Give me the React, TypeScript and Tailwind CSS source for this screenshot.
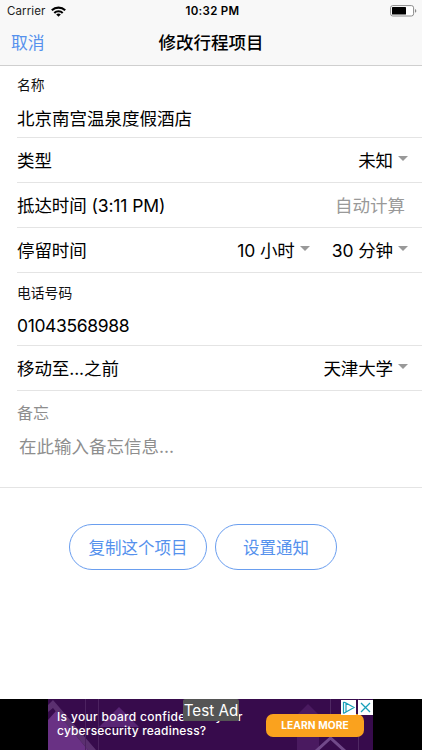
import React from 'react';

type PickerProps = {
  value: string;
  className?: string;
};

type RowProps = {
  label: string;
  className?: string;
  children?: React.ReactNode;
};

type FieldProps = {
  label: string;
  value: string;
  className?: string;
  valueClassName?: string;
};

const StatusBar: React.FC = () => (
  <div className="grid h-[22px] grid-cols-3 items-center pl-[7px] pr-[5px] text-[11.5px] leading-[22px]">
    <div className="flex items-center gap-[6px]">
      <span className="tracking-[0.1px] text-[#222]">Carrier</span>
      <svg width="15" height="11" viewBox="0 0 15 11" fill="none" stroke="#000" strokeWidth="2.1">
        <path d="M.8 4.3a9.6 9.6 0 0 1 13.4 0" />
        <path d="M3.3 7a6 6 0 0 1 8.4 0" />
        <path d="M7.5 10.8L5.2 8.5a3.3 3.3 0 0 1 4.6 0z" fill="#000" stroke="none" />
      </svg>
    </div>
    <span className="whitespace-nowrap pl-px text-center font-semibold tracking-[0.3px]">10:32 PM</span>
    <svg className="justify-self-end" width="27" height="12" viewBox="0 0 27 12">
      <rect x="0.6" y="0.6" width="23" height="10.4" rx="2.2" fill="#fff" stroke="#8b8b8b" />
      <rect x="2" y="2" width="14" height="7.6" rx="0.6" fill="#000" />
      <path d="M25 4v3.8c1.8-.6 1.8-3.2 0-3.8z" fill="#8b8b8b" />
    </svg>
  </div>
);

const Picker: React.FC<PickerProps> = ({ value, className = '' }) => (
  <div className={`flex items-center gap-[5px] ${className}`}>
    <span className="tracking-[-0.1px]">{value}</span>
    <svg className="mb-[5px]" width="10" height="5" viewBox="0 0 10 5">
      <path d="M0 0h10L5 5z" fill="#999" />
    </svg>
  </div>
);

const Row: React.FC<RowProps> = ({ label, className = 'h-[45px]', children }) => (
  <div className={`flex items-center justify-between border-b border-[#e4e4e4] pr-[14px] pt-[2px] ${className}`}>
    <span className="tracking-[-0.1px]">{label}</span>
    <div className="flex items-center">{children}</div>
  </div>
);

const Field: React.FC<FieldProps> = ({ label, value, className = '', valueClassName = '' }) => (
  <div className={`border-b border-[#e4e4e4] ${className}`}>
    <div className="text-[13.8px] leading-5 text-[#111]">{label}</div>
    <div className={`leading-[26px] ${valueClassName}`}>{value}</div>
  </div>
);

const AdBanner: React.FC = () => (
  <div className="relative flex h-[51px] bg-black pl-12">
    <div className="relative h-full w-[325px] overflow-hidden bg-[#370b4c]">
      <svg className="absolute inset-0" width="325" height="51" viewBox="0 0 325 51">
        <path d="M0 21L8 12L40 51H0z" fill="#693184" />
        <path d="M0 6L5 1L48 51H40L5 9L0 13z" fill="#5b3070" />
        <path d="M51 28L71 8L91 28z" fill="#592574" />
        <path d="M37.5 0V51M50.5 0V51" stroke="#4c2260" />
        <path d="M249 51V16L260 5L271 16V51z" fill="#4a1a60" />
        <path d="M282.5 0V39M310.5 0V51" stroke="#4f2863" />
        <path d="M267 53L282.5 39L298 53" fill="none" stroke="#71498a" strokeWidth="3" />
      </svg>
      <div className="relative flex h-full items-start justify-between">
        <p className="whitespace-nowrap pl-[9px] pt-[11px] text-[12px] font-medium leading-[14px] text-white">
          <span className="tracking-[0.32px]">Is your board confident in your</span>
          <br />
          <span className="tracking-[0.18px]">cybersecurity readiness?</span>
        </p>
        <button className="mr-[9px] mt-[15px] h-[23px] w-[98px] rounded-[7px] bg-[#faa21e] text-[10.2px] font-bold tracking-[0.1px] text-white">
          LEARN MORE
        </button>
      </div>
      <div className="absolute right-0 top-[1px] flex gap-[2px]">
        <svg width="15" height="15" viewBox="0 0 15 15" fill="none" stroke="#18a0b9">
          <path d="M0 0h15v15H0z" fill="#fff" stroke="none" />
          <path d="M2.5 2v11.5M5 3l8 4.5L5 12zM2.5 2L5 3M2.5 13.5L5 12" strokeWidth="1.2" />
        </svg>
        <svg width="15" height="15" viewBox="0 0 15 15" fill="none" stroke="#18a0b9">
          <path d="M0 0h15v15H0z" fill="#fff" stroke="none" />
          <path d="M3 3l9 9M12 3l-9 9" strokeWidth="1.3" />
        </svg>
      </div>
    </div>
    <div className="absolute left-[183px] top-0 h-[22px] w-14 whitespace-nowrap rounded-[2px] bg-[#555] text-center text-[15.2px] leading-[23px] text-white">
      Test Ad
    </div>
  </div>
);

const App: React.FC = () => {
  return (
    <div className="flex h-[750px] w-[422px] flex-col overflow-hidden bg-white font-[Inter,'Noto_Sans_CJK_SC',sans-serif] text-[17.5px] text-black">
      <header className="h-[66px] border-b border-[#cfcfcf] bg-[#f8f8f8]">
        <StatusBar />
        <div className="grid h-[42px] grid-cols-3 items-center px-[11px] pt-px">
          <button className="justify-self-start text-[16.8px] text-[#5591ed]">取消</button>
          <h1 className="whitespace-nowrap text-center font-medium">修改行程项目</h1>
        </div>
      </header>

      <main className="flex-1">
        <div className="pl-[17px]">
          <Field
            label="名称"
            value="北京南宫温泉度假酒店"
            className="h-[72px] pt-[9px]"
            valueClassName="mt-[11px]"
          />
          <Row label="类型">
            <Picker value="未知" />
          </Row>
          <Row label="抵达时间 (3:11 PM)">
            <span className="mr-[3px] text-[#999]">自动计算</span>
          </Row>
          <Row label="停留时间">
            <Picker value="10 小时" className="mr-[22px]" />
            <Picker value="30 分钟" />
          </Row>
          <Field
            label="电话号码"
            value="01043568988"
            className="h-[73px] pt-[10px]"
            valueClassName="mt-[10px] tracking-[-0.36px]"
          />
          <Row label="移动至...之前">
            <Picker value="天津大学" />
          </Row>
        </div>
        <div className="h-[97px] border-b border-[#e4e4e4] pl-[17px] pt-[10px] text-[#8e8e8e]">
          <div className="text-[16px] leading-6">备忘</div>
          <div className="ml-[2px] mt-[9px] leading-[26px]">在此输入备忘信息...</div>
        </div>
        <div className="flex gap-2 pl-[69px] pt-9 text-[16.5px] text-[#5591ed]">
          <button className="h-[46px] w-[138px] rounded-full border border-[#6a9eef] pt-[2px]">复制这个项目</button>
          <button className="h-[46px] w-[122px] rounded-full border border-[#6a9eef] pt-[2px]">设置通知</button>
        </div>
      </main>

      <AdBanner />
    </div>
  );
};

export default App;
